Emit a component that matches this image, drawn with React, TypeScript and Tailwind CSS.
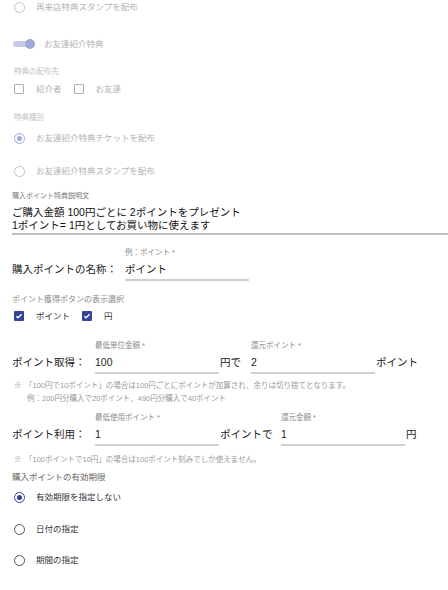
import React from 'react';

const font = { fontFamily: '"Liberation Sans", "Noto Sans CJK JP", sans-serif' };

type RadioProps = { checked?: boolean; tone: 'muted' | 'active'; label: string; className?: string };

const Radio: React.FC<RadioProps> = ({ checked, tone, label, className }) => {
    const ring = tone === 'muted' ? (checked ? 'border-[#9fa8da]' : 'border-[#c4c4c4]') : checked ? 'border-[#2f3d9c]' : 'border-[#555]';
    const dot = tone === 'muted' ? 'bg-[#9fa8da]' : 'bg-[#2f3d9c]';
    const text = tone === 'muted' ? 'text-[#b3b3b3]' : 'text-[#333]';
    return (
        <div className={`flex h-[15px] items-center pl-[2px] ${className ?? ''}`}>
            <span className={`flex h-[11px] w-[11px] items-center justify-center rounded-full border-[1.5px] ${ring}`}>
                {checked && <span className={`h-[5px] w-[5px] rounded-full ${dot}`} />}
            </span>
            <span className={`ml-[11px] text-[8.5px] leading-[15px] ${text}`}>{label}</span>
        </div>
    );
};

const Checkbox: React.FC<{ checked?: boolean; label: string; muted?: boolean }> = ({ checked, label, muted }) => (
    <div className="flex items-center">
        {checked ? (
            <span className="flex h-[10px] w-[10px] items-center justify-center rounded-[1px] bg-[#34449b]">
                <svg width="8" height="8" viewBox="0 0 24 24" fill="none" stroke="white" strokeWidth="4">
                    <path d="M4 12.5l5 5L20 6.5" />
                </svg>
            </span>
        ) : (
            <span className="h-[10px] w-[10px] rounded-[1px] border-[1.5px] border-[#b0b0b0]" />
        )}
        <span className={`ml-[12px] text-[8.5px] leading-[12px] ${muted ? 'text-[#b3b3b3]' : 'text-[#333]'}`}>{label}</span>
    </div>
);

const Field: React.FC<{ label: string; value: string; width?: string }> = ({ label, value, width = 'w-[124px]' }) => (
    <div className={`flex flex-col ${width}`}>
        <span className="h-[10px] text-[7.5px] leading-[10px] text-[#8a8a8a]">{label}</span>
        <span className="mt-[5px] h-[13px] text-[10.5px] leading-[13px] text-[#222]">{value}</span>
        <span className="mt-[3px] h-[2px] bg-[#cfcfcf]" />
    </div>
);

const Unit: React.FC<{ children: React.ReactNode; className?: string }> = ({ children, className }) => (
    <span className={`pb-[5px] text-[10.5px] leading-[13px] text-[#222] ${className ?? ''}`}>{children}</span>
);

export default function App() {
    return (
        <div className="w-[448px] h-[590px] overflow-hidden bg-white pl-3" style={font}>
            <Radio tone="muted" label="再来店特典スタンプを配布" />

            <div className="mt-[22px] flex h-[14px] items-center">
                <div className="relative h-[14px] w-[24px]">
                    <span className="absolute left-[1px] top-[4px] h-[6px] w-[18px] rounded-full bg-[#c5cae9]" />
                    <span className="absolute left-[13px] top-[2px] h-[10px] w-[10px] rounded-full bg-[#9fa8da]" />
                </div>
                <span className="ml-[8px] text-[8.5px] text-[#b3b3b3]">お友達紹介特典</span>
            </div>

            <div className="mt-[16px] h-[10px] pl-[2px] text-[7.5px] leading-[10px] text-[#c2c2c2]">特典の配布先</div>
            <div className="mt-[6px] flex h-[12px] gap-[12px] pl-[2px]">
                <Checkbox muted label="紹介者" />
                <Checkbox muted label="お友達" />
            </div>

            <div className="mt-[18px] h-[10px] pl-[2px] text-[7.5px] leading-[10px] text-[#c2c2c2]">特典種別</div>
            <Radio tone="muted" checked label="お友達紹介特典チケットを配布" className="mt-[8px]" />
            <Radio tone="muted" label="お友達紹介特典スタンプを配布" className="mt-[18px]" />

            <div className="mt-[12px] h-[10px] text-[7px] leading-[10px] text-[#777]">購入ポイント特典説明文</div>
            <div className="mt-[5px] border-b-2 border-[#bdbdbd] pb-[1px] text-[10.5px] leading-[13px] text-[#111]">
                <div>ご購入金額 100円ごとに 2ポイントをプレゼント</div>
                <div>1ポイント= 1円としてお買い物に使えます</div>
            </div>

            <div className="mt-[13px] flex items-end">
                <Unit className="w-[113px]">購入ポイントの名称：</Unit>
                <Field label="例：ポイント *" value="ポイント" />
            </div>

            <div className="mt-[14px] h-[10px] text-[8px] leading-[10px] text-[#888]">ポイント獲得ボタンの表示選択</div>
            <div className="mt-[5px] flex h-[12px] gap-[12px] pl-[2px]">
                <Checkbox checked label="ポイント" />
                <Checkbox checked label="円" />
            </div>

            <div className="mt-[19px] flex items-end">
                <Unit className="w-[83px]">ポイント取得：</Unit>
                <Field label="最低単位金額 *" value="100" />
                <Unit className="ml-[1px] w-[31px]">円で</Unit>
                <Field label="還元ポイント *" value="2" />
                <Unit className="ml-[1px]">ポイント</Unit>
            </div>

            <div className="mt-[5px] flex pl-[2px] text-[7.5px] leading-[13px] text-[#999]">
                <span className="w-[11px]">※</span>
                <div>
                    <div>「100円で10ポイント」の場合は100円ごとにポイントが加算され、余りは切り捨てとなります。</div>
                    <div className="pl-[2px]">例：200円分購入で20ポイント、490円分購入で40ポイント</div>
                </div>
            </div>

            <div className="mt-[8px] flex items-end">
                <Unit className="w-[83px]">ポイント利用：</Unit>
                <Field label="最低使用ポイント *" value="1" />
                <Unit className="ml-[1px] w-[61px]">ポイントで</Unit>
                <Field label="還元金額 *" value="1" />
                <Unit className="ml-[1px]">円</Unit>
            </div>

            <div className="mt-[7px] flex pl-[2px] text-[7.5px] leading-[13px] text-[#999]">
                <span className="w-[11px]">※</span>
                <span>「100ポイントで10円」の場合は100ポイント刻みでしか使えません。</span>
            </div>

            <div className="mt-[6px] h-[10px] text-[8.5px] leading-[10px] text-[#666]">購入ポイントの有効期限</div>
            <Radio tone="active" checked label="有効期限を指定しない" className="mt-[8px]" />
            <Radio tone="active" label="日付の指定" className="mt-[17px]" />
            <Radio tone="active" label="期間の指定" className="mt-[16px]" />
        </div>
    );
}
